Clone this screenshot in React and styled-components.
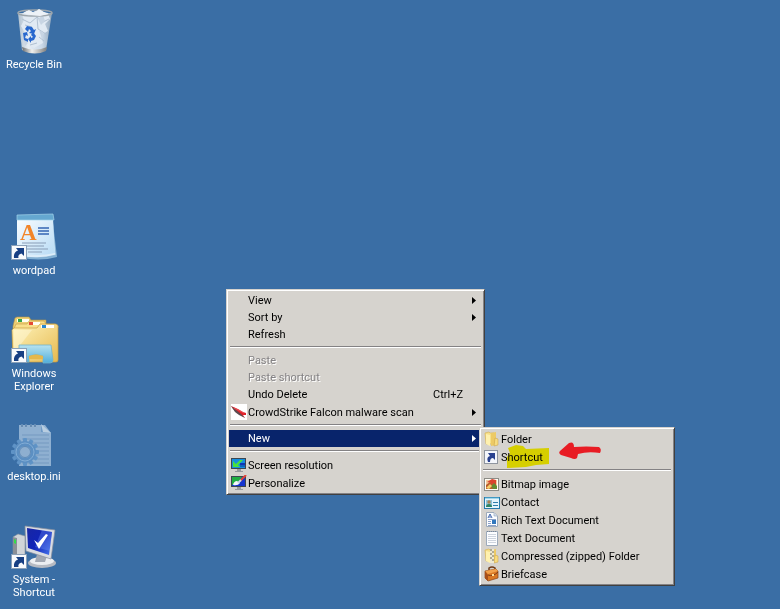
import React from "react";
import styled, { createGlobalStyle, css } from "styled-components";

const GlobalStyle = createGlobalStyle`
  * {
    box-sizing: border-box;
  }
  body {
    margin: 0;
    background-color: #3a6ea5;
    font-family: Roboto, "Noto Sans", sans-serif;
    font-size: 11px;
  }
`;

const Desktop = styled.main`
  position: relative;
  min-height: 100vh;
  padding: 7px 0;
`;

const IconGrid = styled.nav`
  display: grid;
  grid-template-columns: 68px;
  grid-template-rows: repeat(5, 103px) auto;
`;

const Launcher = styled.button`
  grid-row: ${(p) => p.$slot};
  align-self: start;
  display: flex;
  flex-direction: column;
  align-items: center;
  gap: 3px;
  padding: 0;
  border: none;
  background: none;
  color: #ffffff;
  font: inherit;
  line-height: 13px;

  svg {
    width: 48px;
    height: 48px;
    overflow: visible;
  }
`;

const LauncherLabel = styled.span`
  max-width: 64px;
  text-align: center;
`;

const Panel = styled.div`
  position: absolute;
  padding: 2px;
  border: 1px solid;
  border-color: #d6d3ce #404040 #404040 #d6d3ce;
  background-color: #d6d3ce;
  box-shadow: inset 1px 1px 0 #ffffff, inset -1px -1px 0 #848284;
`;

const ContextMenu = styled(Panel)`
  left: 226px;
  top: 289px;
  width: 259px;
`;

const SubMenu = styled(Panel)`
  left: 250px;
  top: -3px;
  width: 196px;
`;

const ItemWrap = styled.div`
  position: relative;
`;

const Item = styled.button`
  display: flex;
  align-items: center;
  width: 100%;
  height: ${(p) => (p.$tall ? "18px" : "17px")};
  padding: 0 6px 0 2px;
  border: none;
  background: none;
  color: #000000;
  font: inherit;
  line-height: 17px;
  text-align: left;
  white-space: nowrap;

  ${(p) =>
    p.$active &&
    css`
      background-color: #08246b;
      color: #ffffff;
    `}

  &:disabled {
    color: #848284;
    text-shadow: 1px 1px 0 #ffffff;
  }
`;

const IconSlot = styled.span`
  display: flex;
  flex: none;
  width: 17px;

  svg {
    width: 16px;
    height: 16px;
  }
`;

const Text = styled.span`
  flex: 1;
`;

const Keys = styled.span`
  padding-right: 13px;
`;

const Arrow = styled.svg`
  width: 4px;
  height: 7px;
  fill: currentColor;
`;

const Divider = styled.hr`
  height: 2px;
  margin: 3px 1px 4px;
  border: none;
  border-top: 1px solid #848284;
  border-bottom: 1px solid #ffffff;
`;

const Marker = styled.svg`
  position: absolute;
  left: 24px;
  top: -4px;
  width: 44px;
  height: 26px;
  mix-blend-mode: multiply;
  pointer-events: none;
`;

const Pointer = styled.svg`
  position: absolute;
  left: 76px;
  top: -7px;
  width: 44px;
  height: 22px;
  pointer-events: none;
`;

/* desktop icons */

const ShortcutBadge = () => (
  <g>
    <rect x="1.5" y="32.5" width="15" height="14" fill="#f8fafc" stroke="#8aa0b8" />
    <path d="M4 45C3.5 41 5 38.5 8 37.5L6 35H14V43L11.5 40.5C8.5 41.5 8 43 8.5 45Z" fill="#173f83" />
  </g>
);

const RecycleBin = () => (
  <svg viewBox="0 0 48 48" aria-hidden="true">
    <defs>
      <linearGradient id="glass">
        <stop offset="0" stopColor="#aebfce" />
        <stop offset=".3" stopColor="#e6edf4" />
        <stop offset=".7" stopColor="#cbd9e8" />
        <stop offset="1" stopColor="#91a6ba" />
      </linearGradient>
      <linearGradient id="metal">
        <stop offset="0" stopColor="#686c70" />
        <stop offset=".4" stopColor="#f0f0ec" />
        <stop offset="1" stopColor="#7b7c7c" />
      </linearGradient>
    </defs>
    <path d="M8 6L12 43Q25 48 36 43L42 6Z" fill="url(#glass)" />
    <path d="M12 7L18 3 23 5 29 2 33 5 38 6 40 12 35 17 38 24 31 28 33 36 24 41 17 36 15 26 11 19 14 13Z" fill="#e1eaf3" />
    <path d="M12 12L20 16 27 10 33 15 39 12M27 10L28 22 36 27M15 18L22 20M29 30L34 34M20 38L27 36" stroke="#b1c1d2" strokeWidth="1" fill="none" />
    <path d="M28 12L33 8 35 14 31 18ZM13 30L18 36 15 39ZM29 23L34 26 32 32Z" fill="#c8d5e3" />
    <ellipse cx="25" cy="6" rx="17" ry="3" fill="none" stroke="#9da6ad" strokeWidth="1.5" />
    <path d="M13 6L19 3 24 6 29 2 34 5 38 7 30 9 21 8Z" fill="#edf2f7" />
    <path d="M12 40Q25 45 37 40L36 44Q25 49 13 44Z" fill="url(#metal)" />
    <g fill="#2868ce">
      <path d="M15 22L17 19 22 20 24 23 26 22 24 27 19 26 21 24 19 22 18 25Z" />
      <path d="M13 26L17 25 18 29 16 28 15 31 18 32V35L14 33Z" />
      <path d="M23 25L26 29 24 33 21 34V36L18 32 21 29V31L23 30 21 28Z" />
    </g>
  </svg>
);

const Wordpad = () => (
  <svg viewBox="0 0 48 48" aria-hidden="true">
    <defs>
      <linearGradient id="sheet" x2="1" y2="1">
        <stop offset="0" stopColor="#f8fcff" />
        <stop offset="1" stopColor="#b9dcf5" />
      </linearGradient>
    </defs>
    <path d="M9 10H43L47 44Q28 49 10 44Z" fill="#84b2d5" />
    <path d="M8 9H42L46 42Q28 47 9 43Z" fill="#dcedf9" stroke="#75a5ca" strokeWidth=".6" />
    <path d="M7 6H43L45 40Q28 44 7 40Z" fill="url(#sheet)" />
    <path d="M7 2L43 1 44 7H7Z" fill="#65a8d0" stroke="#a2d2ea" strokeWidth=".7" />
    <text x="10" y="27" fontFamily="Liberation Serif, serif" fontSize="23" fontWeight="bold" fill="#f28529">A</text>
    <path d="M28 15H39M28 18H39M28 21H39" stroke="#3565b4" strokeWidth="1.5" />
    <path d="M12 30H36M14 33H34M17 36H38M18 39H32" stroke="#899db6" />
    <ShortcutBadge />
  </svg>
);

const Explorer = () => (
  <svg viewBox="0 0 48 48" aria-hidden="true">
    <defs>
      <linearGradient id="manila" x2="1" y2="1">
        <stop offset="0" stopColor="#fff5bd" />
        <stop offset="1" stopColor="#e6b94f" />
      </linearGradient>
      <linearGradient id="aqua" x2="0" y2="1">
        <stop offset="0" stopColor="#b8e3f0" />
        <stop offset="1" stopColor="#51aedb" />
      </linearGradient>
    </defs>
    <path d="M3 10L5 2 7 1H19L21 4H36V40H3Z" fill="#edcf74" stroke="#b69443" strokeWidth=".6" />
    <rect x="7" y="3" width="12" height="3" fill="#fffef3" />
    <rect x="8" y="3" width="4" height="3" fill="#36a44c" />
    <path d="M3 15L6 8H17L19 5H34L36 8H45V43H4Z" fill="#f8df8b" stroke="#c59c45" strokeWidth=".6" />
    <rect x="19" y="6" width="11" height="3" fill="#fffef3" />
    <rect x="19" y="6" width="4" height="3" fill="#e54a35" />
    <path d="M2 14L4 12H27L30 8H46Q49 9 48 12V44Q48 46 46 46H5Q3 46 3 43Z" fill="url(#manila)" stroke="#c99e42" strokeWidth=".7" />
    <rect x="31" y="9" width="13" height="3" fill="#ffffff" />
    <rect x="32" y="9" width="4" height="3" fill="#2988d1" />
    <path d="M4 14L22 14 4 37Z" fill="#fffbe0" opacity=".45" />
    <path d="M9 29H41L43 44Q43 47 40 47H33V40Q26 37 19 40V46H9Z" fill="url(#aqua)" stroke="#72b3cc" strokeWidth=".8" />
    <path d="M19 40Q26 37 33 40V43H19Z" fill="#e4b84d" />
    <ShortcutBadge />
  </svg>
);

const teeth = [0, 30, 60, 90, 120, 150, 180, 210, 240, 270, 300, 330];

const DesktopIni = () => (
  <svg viewBox="0 0 48 48" aria-hidden="true">
    <path d="M9 6H35L41 14V47H9Z" fill="#8fb0d1" />
    <path d="M31 6L41 14 31 13Z" fill="#6f9ac5" />
    <path d="M31 5L33 13 41 14Z" fill="#b9cee1" />
    <path d="M12 16H39M12 20H39M12 24H39M12 28H39M12 32H39M12 36H39M12 40H39M12 44H39" stroke="#7499c0" />
    <g fill="#426f9f" stroke="#b6cadd" strokeWidth=".5">
      <circle cx="12" cy="7" r="1.3" />
      <circle cx="16" cy="7" r="1.3" />
      <circle cx="21" cy="7" r="1.3" />
      <circle cx="25" cy="7" r="1.3" />
    </g>
    <g fill="#5f93c6">
      {teeth.map((deg) => (
        <rect key={deg} x="13" y="19" width="4" height="6" rx="1" transform={`rotate(${deg} 15 33)`} />
      ))}
    </g>
    <circle cx="15" cy="33" r="8.5" fill="none" stroke="#5c8fc2" strokeWidth="5" />
    <circle cx="15" cy="33" r="9" fill="none" stroke="#82add6" strokeWidth="1" />
    <circle cx="15" cy="33" r="5.5" fill="#8eafd0" stroke="#4a7bae" strokeWidth=".7" />
  </svg>
);

const SystemIcon = () => (
  <svg viewBox="0 0 48 48" aria-hidden="true">
    <defs>
      <linearGradient id="screen" x2="1" y2="1">
        <stop offset="0" stopColor="#1826a3" />
        <stop offset=".5" stopColor="#1024b8" />
        <stop offset="1" stopColor="#4877ef" />
      </linearGradient>
    </defs>
    <path d="M3 15L8 12 15 14V36L3 33Z" fill="#d0d4d8" stroke="#858e98" strokeWidth=".6" />
    <path d="M3 15L7 16V34L3 33Z" fill="#898f97" />
    <path d="M4 17L6 18V22L4 21Z" fill="#32dd48" />
    <ellipse cx="32" cy="41" rx="14" ry="5" fill="#b6bac2" />
    <ellipse cx="32" cy="39" rx="12" ry="4" fill="#eceef1" />
    <path d="M27 32L37 34 35 40H25Z" fill="#a2a8b3" />
    <path d="M15 4L45 8 41 37 16 29Z" fill="#d9dce2" stroke="#878e9c" strokeWidth=".7" />
    <path d="M17 6L42 10 39 33 18 26Z" fill="url(#screen)" />
    <path d="M32 8L42 10 40 29 25 25Z" fill="#7da1ff" opacity=".3" />
    <path d="M24 18L28 21 36 12 38 13 29 27Z" fill="#ffffff" />
    <ShortcutBadge />
  </svg>
);

/* menu icons */

const FalconIcon = () => (
  <svg viewBox="0 0 16 16" aria-hidden="true">
    <rect width="16" height="16" fill="#ffffff" />
    <path d="M0 2L7 5 12 8 15 9 15 11 12 11 14 14 10 11 6 9 3 6Z" fill="#df2028" />
    <path d="M0 2L5 6 10 10 14 14 8 11 4 8Z" fill="#5c4c50" />
    <path d="M3 4L9 7 13 9" stroke="#ee5a60" strokeWidth=".8" fill="none" />
  </svg>
);

const ScreenIcon = ({ brush }) => (
  <svg viewBox="0 0 16 16" aria-hidden="true">
    <path d="M6 12H10V14H12V15H4V14H6Z" fill="#999c9f" />
    <rect x=".5" y="1.5" width="14" height="10" fill="#1434cf" stroke="#3d4650" />
    {brush ? (
      <>
        <path d="M1 2H11L7 7 1 10Z" fill="#20ad42" />
        <path d="M2 10Q3 6 6 6L9 8Q7 11 2 10Z" fill="#f5f7fa" />
        <path d="M9 6L15 0" stroke="#e04539" strokeWidth="2" />
        <path d="M7 8L10 5" stroke="#c8dae9" strokeWidth="2" />
      </>
    ) : (
      <>
        <path d="M1 2H14V6H9V8H14V11H1Z" fill="#148edf" />
        <path d="M2 4V10H9L7 8 12 3H9L5 7Z" fill="#48e23c" />
        <path d="M9 7H14M9 9H14" stroke="#0a399e" />
      </>
    )}
  </svg>
);

const FolderIcon = ({ zip }) => (
  <svg viewBox="0 0 16 16" aria-hidden="true">
    <path d="M1 2L5 1 6 2H10V13H2Z" fill="#f6df89" stroke="#d5ae4e" strokeWidth=".6" />
    <path d="M2 3L6 4V15L2 13Z" fill="#fff1ae" />
    <path d="M7 2L12 1V14L7 15Z" fill="#edca65" />
    <path d="M11 7L14 8V14L10 15Z" fill="#f7dc80" stroke="#c59c43" strokeWidth=".5" />
    {zip && (
      <>
        <rect x="6" y="1" width="4" height="14" fill="#eee9d1" />
        <path d="M6 2H8M8 4H10M6 6H8M8 8H10M6 10H8M8 12H10" stroke="#716b57" />
      </>
    )}
  </svg>
);

const LinkIcon = () => (
  <svg viewBox="0 0 16 16" aria-hidden="true">
    <rect x=".5" y="1.5" width="13" height="13" fill="#f4f6fb" stroke="#8f959f" />
    <path d="M4 13Q2 8 6 7L4 4H11V11L9 9Q6 9 6 13Z" fill="#29418f" />
  </svg>
);

const BitmapIcon = () => (
  <svg viewBox="0 0 16 16" aria-hidden="true">
    <rect x=".5" y="2.5" width="14" height="12" fill="#fffdf6" stroke="#8c8c86" />
    <rect x="2" y="4" width="11" height="9" fill="#f2cc9b" />
    <path d="M2 9L6 6 9 8 13 12V13H2Z" fill="#b95c29" />
    <path d="M3 6L8 3 12 4V9L8 10 7 7Z" fill="#db432d" />
    <path d="M7 10L10 7 13 10V13H9Z" fill="#648b32" />
    <path d="M2 12L6 8 8 10 5 13Z" fill="#f5d06c" />
  </svg>
);

const ContactIcon = () => (
  <svg viewBox="0 0 16 16" aria-hidden="true">
    <rect x=".5" y="3.5" width="15" height="11" fill="#e4f4fb" stroke="#287ba9" />
    <path d="M1 4H15" stroke="#5bb7da" />
    <rect x="2" y="6" width="6" height="7" fill="#8cc2d8" />
    <circle cx="5" cy="8" r="1.7" fill="#a98355" />
    <path d="M2 13Q2 10 5 10T8 13Z" fill="#2f8460" />
    <path d="M9 8.5H14M9 11.5H14" stroke="#2e7eac" />
  </svg>
);

const PageIcon = ({ rich }) => (
  <svg viewBox="0 0 16 16" aria-hidden="true">
    <path d={rich ? "M2.5 .5H10L13.5 4V14.5H2.5Z" : "M2.5 1.5H13.5V15.5H2.5Z"} fill="#fcfdff" stroke="#9caabb" />
    {rich ? (
      <>
        <path d="M10 1V4H13" fill="#d4e2f2" stroke="#9caabb" strokeWidth=".7" />
        <path d="M4 6L6 2 8 6M5 5H7" stroke="#4166ad" fill="none" />
        <path d="M4 7.5H12M4 9.5H7M4 11.5H7M4 13.5H12" stroke="#8ba1c8" />
        <rect x="8" y="8" width="4" height="4" fill="#3278bd" />
      </>
    ) : (
      <>
        <path d="M4 4.5H12M4 6.5H12M4 8.5H12M4 10.5H12M4 12.5H12" stroke="#cdd4de" />
        <path d="M3 1.5H13" stroke="#788594" strokeDasharray="1 1" />
      </>
    )}
  </svg>
);

const BriefcaseIcon = () => (
  <svg viewBox="0 0 16 16" aria-hidden="true">
    <path d="M5 4V2Q8 0 11 2V4" fill="none" stroke="#6f3c1a" strokeWidth="1.5" />
    <path d="M1 5L12 3 14 5V12L4 15 1 12Z" fill="#d97824" stroke="#87431a" strokeWidth=".7" />
    <path d="M1 5L4 8 14 5 12 3Z" fill="#f2a14b" />
    <path d="M1 5L4 9V15L1 12Z" fill="#a74f1a" />
    <path d="M4 9Q9 11 14 6" stroke="#7d3b17" fill="none" />
    <rect x="8" y="8" width="2" height="2" fill="#ffe09a" />
  </svg>
);

const MenuItem = ({ icon, label, keys, arrow, ...rest }) => (
  <Item type="button" role="menuitem" {...rest}>
    <IconSlot>{icon}</IconSlot>
    <Text>{label}</Text>
    {keys && <Keys>{keys}</Keys>}
    {arrow && (
      <Arrow viewBox="0 0 4 7" aria-hidden="true">
        <path d="M0 0L4 3.5L0 7Z" />
      </Arrow>
    )}
  </Item>
);

const launchers = [
  { slot: 1, label: "Recycle Bin", icon: <RecycleBin /> },
  { slot: 3, label: "wordpad", icon: <Wordpad /> },
  { slot: 4, label: "Windows Explorer", icon: <Explorer /> },
  { slot: 5, label: "desktop.ini", icon: <DesktopIni /> },
  { slot: 6, label: "System - Shortcut", icon: <SystemIcon /> },
];

const App = () => {
  return (
    <>
      <GlobalStyle />
      <Desktop>
        <IconGrid aria-label="Desktop">
          {launchers.map((l) => (
            <Launcher key={l.label} type="button" $slot={l.slot}>
              {l.icon}
              <LauncherLabel>{l.label}</LauncherLabel>
            </Launcher>
          ))}
        </IconGrid>

        <ContextMenu role="menu">
          <MenuItem label="View" arrow />
          <MenuItem label="Sort by" arrow />
          <MenuItem label="Refresh" />
          <Divider />
          <MenuItem label="Paste" disabled />
          <MenuItem label="Paste shortcut" disabled />
          <MenuItem label="Undo Delete" keys="Ctrl+Z" />
          <MenuItem $tall icon={<FalconIcon />} label="CrowdStrike Falcon malware scan" arrow />
          <Divider />
          <ItemWrap>
            <MenuItem $active label="New" arrow />
            <SubMenu role="menu">
              <MenuItem $tall icon={<FolderIcon />} label="Folder" />
              <ItemWrap>
                <MenuItem $tall icon={<LinkIcon />} label="Shortcut" />
                <Marker viewBox="0 0 44 26" aria-hidden="true">
                  <path d="M2 4L10 1 17 2 20 5 43 4V20L30 21 20 23 1 24V13L4 9Z" fill="#fffb00" />
                </Marker>
                <Pointer viewBox="0 0 44 22" aria-hidden="true">
                  <path d="M11 2Q16 0 16 6Q28 5 41 6Q44 8 42 12Q30 10 20 13L19 17Q17 19 13 17L3 14Q0 12 2 10Z" fill="#e81c24" />
                </Pointer>
              </ItemWrap>
              <Divider />
              <MenuItem $tall icon={<BitmapIcon />} label="Bitmap image" />
              <MenuItem $tall icon={<ContactIcon />} label="Contact" />
              <MenuItem $tall icon={<PageIcon rich />} label="Rich Text Document" />
              <MenuItem $tall icon={<PageIcon />} label="Text Document" />
              <MenuItem $tall icon={<FolderIcon zip />} label="Compressed (zipped) Folder" />
              <MenuItem $tall icon={<BriefcaseIcon />} label="Briefcase" />
            </SubMenu>
          </ItemWrap>
          <Divider />
          <MenuItem $tall icon={<ScreenIcon />} label="Screen resolution" />
          <MenuItem $tall icon={<ScreenIcon brush />} label="Personalize" />
        </ContextMenu>
      </Desktop>
    </>
  );
};

export default App;
